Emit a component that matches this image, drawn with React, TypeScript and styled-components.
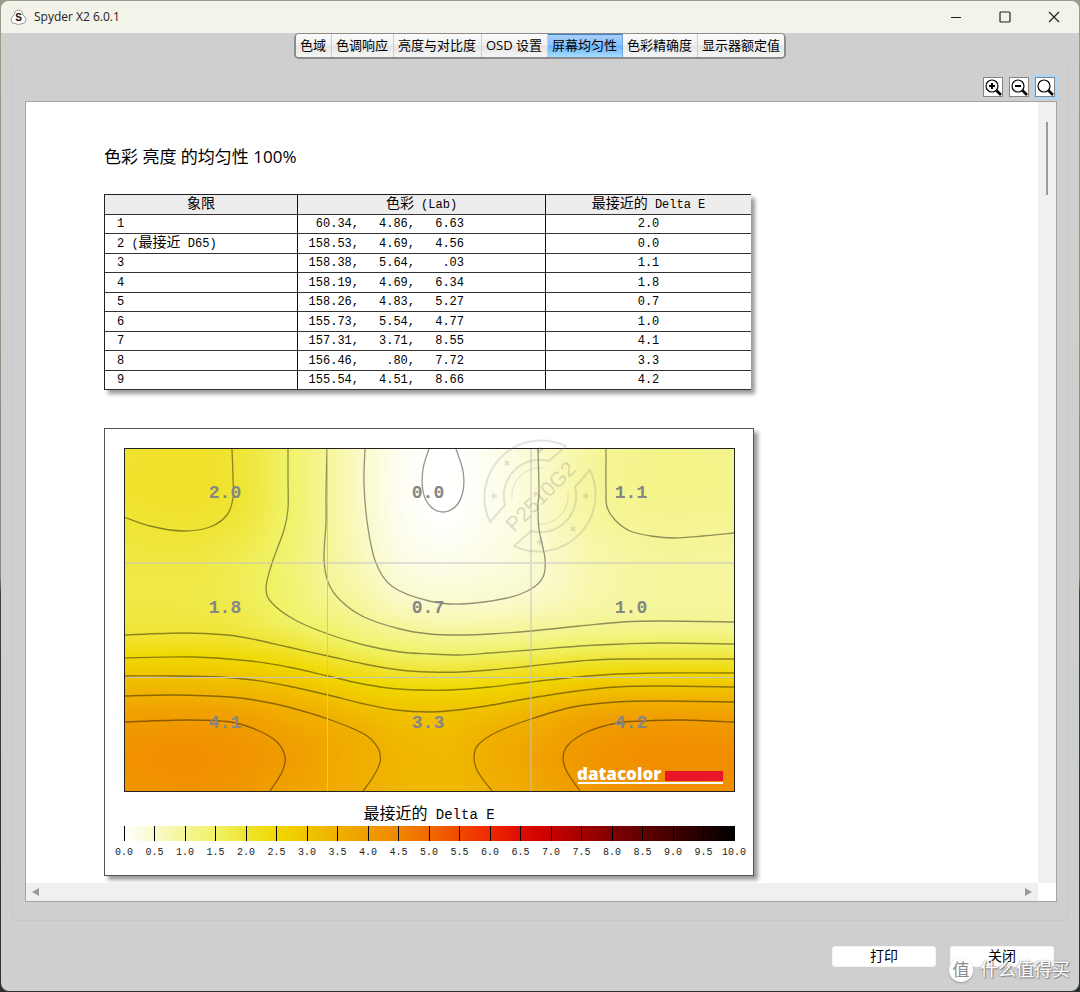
import React from "react";
import styled, { createGlobalStyle, css } from "styled-components";

const ui = `"Open Sans", "Noto Sans CJK SC", sans-serif`;
const mono = `"Liberation Mono", "Noto Sans CJK SC", monospace`;

const GlobalStyle = createGlobalStyle`
  *, *::before, *::after { box-sizing: border-box; }
  body {
    margin: 0;
    background: linear-gradient(#9c9c8a, #8a8a80 58%, #3a403c 60%, #2c302e);
    font-family: ${ui};
    color: #000;
  }
  button { font-family: inherit; color: inherit; cursor: pointer; }
`;

const Desktop = styled.div`
  display: flex;
  min-height: 100vh;
  padding: 1px;
`;

const Window = styled.div`
  position: relative;
  display: flex;
  flex: 1;
  flex-direction: column;
  min-width: 0;
  overflow: hidden;
  border-radius: 8px;
  background: #cfcfcf;
`;

const TitleBar = styled.header`
  display: flex;
  align-items: center;
  height: 32px;
  padding: 0 1px 0 9px;
  background: #f3f3ea;
`;

const Title = styled.h1`
  flex: 1;
  margin: 0 0 0 7px;
  font-size: 12px;
  font-weight: 400;
  line-height: 16px;
  color: #222;
`;

const WindowButton = styled.button`
  display: flex;
  align-items: center;
  justify-content: center;
  width: 49px;
  height: 32px;
  padding: 0;
  border: 0;
  background: none;
`;

const Tabs = styled.nav`
  display: flex;
  align-self: center;
  height: 26px;
  border: 2px solid #8c8c8c;
  border-top: 1px solid #8c8c8c;
  border-radius: 5px;
  overflow: hidden;
  background: #f2f2f2;
`;

const Tab = styled.button<{ $active?: boolean }>`
  height: 23px;
  padding: 0 5px 0 4px;
  border: 0;
  border-right: 1px solid #cdcdcd;
  background: linear-gradient(#fafafa, #f2f2f2 48%, #e4e4e4 52%, #f6f6f6);
  font-size: 13px;
  line-height: 21px;
  white-space: nowrap;

  ${(p) =>
    p.$active &&
    css`
      border-color: #6ea6e4;
      background: linear-gradient(#a9cffa, #8cc2fb 48%, #6db4fc 52%, #a6dcff);
      box-shadow: inset 0 1px #3f7fd0;
    `}

  &:last-child { padding-right: 4px; border-right: 0; }
`;

const Group = styled.main`
  display: flex;
  flex: 1;
  flex-direction: column;
  margin: 2px 11px 0;
  padding: 14px 10px 18px 12px;
  border: 1px solid #c6c6c6;
  border-top: 0;
  border-radius: 0 0 6px 6px;
`;

const Toolbar = styled.div`
  display: flex;
  justify-content: flex-end;
  gap: 6px;
  padding: 2px 2px 4px 0;
`;

const ToolButton = styled.button<{ $active?: boolean }>`
  width: 20px;
  height: 20px;
  padding: 0;
  border: 1px solid #858585;
  background: #fff;
  box-shadow: ${(p) => (p.$active ? "0 0 0 2px #a9d6fb" : "none")};

  svg { display: block; }
`;

const Panel = styled.section`
  display: grid;
  flex: 1;
  grid-template-columns: minmax(0, 1fr) 18px;
  grid-template-rows: 1fr 18px;
  border: 1px solid #a4a4a4;
  background: #fff;
`;

const Report = styled.article`
  padding: 42px 78px 0;
  overflow: hidden;
`;

const Heading = styled.h2`
  margin: 0 0 24px;
  font-size: 17px;
  font-weight: 400;
  line-height: 26px;
`;

const VerticalTrack = styled.div`
  display: flex;
  justify-content: center;
  padding-top: 20px;
  background: #f0f0f0;
`;

const VerticalThumb = styled.div`
  width: 2px;
  height: 73px;
  background: #9a9a9a;
`;

const HorizontalTrack = styled.div`
  display: flex;
  align-items: center;
  justify-content: space-between;
  padding: 0 5px;
  background: #f0f0f0;
`;

const ReportTable = styled.table`
  width: 647px;
  border: 1px solid #222;
  border-right: 0;
  border-bottom: 0;
  border-spacing: 0;
  box-shadow: 4px 4px 4px rgba(0, 0, 0, 0.4);
  table-layout: fixed;
  background: #fff;
`;

const cell = css`
  height: 19px;
  padding: 0;
  border-right: 1px solid #111;
  border-bottom: 1px solid #333;
  font-family: ${mono};
  font-size: 12px;
  font-weight: 400;
  line-height: 18px;
  white-space: pre;

  &:last-child { border-right: 0; }
`;

const HeadCell = styled.th`
  ${cell}
  background: #ededed;
  text-align: center;
`;

const Cell = styled.td<{ $align: "left" | "center" }>`
  ${cell}
  padding-left: ${(p) => (p.$align === "left" ? "12px" : "0")};
  text-align: ${(p) => p.$align};
`;

const Row = styled.tr`
  thead & > *, &:nth-child(even) > * { height: 20px; padding-top: 1px; }
`;

const LabValues = styled.span`
  display: grid;
  grid-template-columns: 49px 56px 49px;
  justify-items: end;
`;

const Han = styled.span`
  font-family: "Noto Sans CJK SC", sans-serif;
  font-size: 14px;
  line-height: 0;
`;

const ChartCard = styled.figure`
  width: 650px;
  margin: 38px 0 6px;
  padding: 19px 19px 15px;
  border: 1px solid #555;
  box-shadow: 4px 4px 4px rgba(0, 0, 0, 0.4);
  background: #fff;

  svg { display: block; overflow: visible; }
`;

const ChartTitle = styled.figcaption`
  padding: 13px 0 1px;
  font-family: ${mono};
  font-size: 14px;
  line-height: 20px;
  text-align: center;

  ${Han} { font-size: 16px; }
`;

const Footer = styled.footer`
  display: flex;
  justify-content: flex-end;
  gap: 14px;
  padding: 25px 25px 24px;
`;

const DialogButton = styled.button`
  width: 104px;
  height: 21px;
  padding: 0 0 2px;
  border: 1px solid #f4f4f4;
  border-radius: 3px;
  background: #fff;
  font-size: 14px;
  line-height: 17px;
`;

const SiteMark = styled.div`
  position: absolute;
  right: 9px;
  bottom: 9px;
  display: flex;
  align-items: center;
  gap: 7px;
  color: #fff;
  font-size: 18px;
  line-height: 25px;
  text-shadow: 0 0 2px #777, 1px 1px 1px #888;
  pointer-events: none;
`;

const SiteBadge = styled.span`
  width: 24px;
  height: 24px;
  border-radius: 50%;
  background: #fff;
  box-shadow: 0 1px 2px #999;
  color: #8c8c8c;
  font-size: 17px;
  line-height: 23px;
  text-align: center;
  text-shadow: none;
`;

type Point = [number, number];

const rows: [string, string[], string][] = [
  ["1", ["60.34,", "4.86,", "6.63"], "2.0"],
  ["2", ["158.53,", "4.69,", "4.56"], "0.0"],
  ["3", ["158.38,", "5.64,", ".03"], "1.1"],
  ["4", ["158.19,", "4.69,", "6.34"], "1.8"],
  ["5", ["158.26,", "4.83,", "5.27"], "0.7"],
  ["6", ["155.73,", "5.54,", "4.77"], "1.0"],
  ["7", ["157.31,", "3.71,", "8.55"], "4.1"],
  ["8", ["156.46,", ".80,", "7.72"], "3.3"],
  ["9", ["155.54,", "4.51,", "8.66"], "4.2"],
];

// Delta E colour scale: value, red, green, blue
const scale: [number, number, number, number][] = [
  [0, 255, 255, 255],
  [0.5, 250, 250, 205],
  [1, 245, 245, 150],
  [1.5, 240, 242, 104],
  [2, 240, 228, 52],
  [2.5, 240, 216, 0],
  [3, 240, 196, 0],
  [3.5, 240, 176, 0],
  [4, 240, 156, 0],
  [4.5, 241, 134, 0],
  [5, 240, 106, 0],
  [6, 240, 40, 0],
  [6.5, 220, 12, 0],
  [7, 200, 0, 0],
  [8, 128, 0, 0],
  [9, 64, 0, 0],
  [10, 0, 0, 0],
];

function colorOf(value: number) {
  const v = Math.max(0, Math.min(10, value));
  let i = 0;
  while (i < scale.length - 2 && v > scale[i + 1][0]) i++;
  const a = scale[i];
  const b = scale[i + 1];
  const t = (v - a[0]) / (b[0] - a[0]);
  const c = [1, 2, 3].map((k) => Math.round(a[k] + (b[k] - a[k]) * t));
  return `rgb(${c.join(",")})`;
}

// Profiles of Delta E down the screen, one for each measured column
const profiles: { x: number; points: Point[] }[] = [
  { x: 0, points: [[0, 2.05], [35, 2.07], [68, 2], [110, 1.86], [140, 1.82], [165, 1.88], [186, 2], [208, 2.5], [227, 3], [247, 3.5], [272, 4], [308, 4.24], [342, 4.18]] },
  { x: 60, points: [[0, 2.1], [35, 2.12], [82, 2], [120, 1.86], [145, 1.82], [165, 1.87], [184, 2], [207, 2.5], [227, 3], [246, 3.5], [270, 4], [308, 4.32], [342, 4.24]] },
  { x: 109, points: [[0, 2], [45, 2.01], [70, 1.95], [110, 1.75], [140, 1.7], [165, 1.78], [187, 2], [210, 2.5], [229, 3], [249, 3.5], [273, 4], [308, 4.22], [342, 4.14]] },
  { x: 164, points: [[0, 1.5], [55, 1.5], [90, 1.44], [125, 1.4], [168, 1.5], [197, 2], [217, 2.5], [236, 3], [257, 3.5], [308, 3.98], [342, 3.85]] },
  { x: 203, points: [[0, 1], [60, 1], [110, 0.98], [134, 1], [185, 1.5], [207, 2], [226, 2.5], [245, 3], [269, 3.5], [308, 3.74], [342, 3.66]] },
  { x: 240, points: [[0, 0.52], [35, 0.5], [60, 0.52], [110, 0.64], [168, 1], [197, 1.5], [215, 2], [234, 2.5], [255, 3], [284, 3.5], [308, 3.55], [342, 3.5]] },
  { x: 276, points: [[0, 0.16], [40, 0.14], [80, 0.19], [143, 0.5], [180, 1], [203, 1.5], [221, 2], [239, 2.5], [261, 3], [308, 3.38], [342, 3.35]] },
  { x: 319, points: [[0, 0], [62, 0], [100, 0.14], [154, 0.5], [186, 1], [206, 1.5], [223, 2], [241, 2.5], [262, 3], [308, 3.28], [342, 3.26]] },
  { x: 366, points: [[0, 0.16], [40, 0.15], [80, 0.19], [152, 0.5], [185, 1], [204, 1.5], [220, 2], [237, 2.5], [257, 3], [286, 3.5], [308, 3.57], [342, 3.5]] },
  { x: 414, points: [[0, 0.5], [60, 0.49], [100, 0.46], [136, 0.5], [181, 1], [200, 1.5], [216, 2], [231, 2.5], [248, 3], [268, 3.5], [308, 3.84], [342, 3.74]] },
  { x: 482, points: [[0, 1], [50, 1], [70, 0.97], [100, 0.86], [135, 0.83], [174, 1], [195, 1.5], [211, 2], [225, 2.5], [238, 3], [254, 3.5], [276, 4], [308, 4.2], [342, 4.12]] },
  { x: 550, points: [[0, 1.12], [35, 1.14], [89, 1], [130, 0.92], [173, 1], [194, 1.5], [210, 2], [224, 2.5], [238, 3], [253, 3.5], [271, 4], [308, 4.35], [342, 4.3]] },
  { x: 610, points: [[0, 1.1], [35, 1.11], [84, 1], [125, 0.92], [173, 1], [194, 1.5], [210, 2], [224, 2.5], [238, 3], [253, 3.5], [272, 4], [308, 4.33], [342, 4.27]] },
];

// Monotone cubic interpolation through sorted points
function interpolate(points: Point[], at: number) {
  const n = points.length;
  let i = 0;
  while (i < n - 2 && at > points[i + 1][0]) i++;
  const slope = (k: number) =>
    (points[k + 1][1] - points[k][1]) / (points[k + 1][0] - points[k][0]);
  const tangent = (k: number) => {
    if (k === 0) return slope(0);
    if (k === n - 1) return slope(n - 2);
    const a = slope(k - 1);
    const b = slope(k);
    return a * b <= 0 ? 0 : (2 * a * b) / (a + b);
  };
  const h = points[i + 1][0] - points[i][0];
  const t = (at - points[i][0]) / h;
  const t2 = t * t;
  const t3 = t2 * t;
  return (
    (2 * t3 - 3 * t2 + 1) * points[i][1] +
    (t3 - 2 * t2 + t) * h * tangent(i) +
    (3 * t2 - 2 * t3) * points[i + 1][1] +
    (t3 - t2) * h * tangent(i + 1)
  );
}

const STRIP = 5;
const strips = Array.from({ length: 610 / STRIP }, (_, k) => k * STRIP);
const samples = Array.from({ length: 39 }, (_, k) => k * 9);
const sampled = samples.map((y) =>
  profiles.map((p): Point => [p.x, interpolate(p.points, y)])
);

const contours: Point[][] = [
  [[305, 0], [299, 20], [299, 42], [306, 57], [319, 63], [332, 57], [339, 42], [339, 22], [332, 0]],
  [[241, 0], [240, 36], [244, 79], [252, 114], [269, 138], [305, 152], [338, 155], [383, 149], [407, 140], [419, 128], [421, 110], [415, 80], [414, 56], [415, 43], [414, 0]],
  [[203, 0], [202, 43], [202, 73], [200, 109], [204, 133], [216, 151], [240, 168], [276, 180], [306, 185], [336, 186], [366, 185], [407, 182], [456, 177], [498, 173], [539, 172], [610, 173]],
  [[482, 0], [482, 42], [483, 58], [491, 71], [506, 82], [527, 87], [550, 89], [579, 87], [610, 84]],
  [[164, 0], [164, 30], [164, 60], [160, 81], [148, 114], [142, 139], [148, 154], [171, 171], [204, 185], [240, 196], [276, 203], [306, 205], [336, 206], [366, 204], [407, 201], [456, 197], [498, 195], [539, 194], [610, 195]],
  [[0, 68], [26, 77], [59, 82], [86, 78], [103, 66], [109, 49], [109, 29], [108, 0]],
  [[0, 186], [59, 184], [103, 186], [133, 191], [164, 198], [204, 207], [240, 215], [276, 221], [306, 223], [336, 223], [366, 221], [407, 217], [456, 212], [498, 210], [610, 210]],
  [[0, 209], [69, 208], [126, 212], [164, 218], [204, 227], [234, 234], [264, 239], [296, 241], [326, 241], [366, 238], [407, 233], [453, 228], [493, 225], [536, 224], [610, 224]],
  [[0, 227], [49, 227], [96, 228], [129, 231], [164, 237], [204, 246], [240, 255], [272, 261], [306, 263], [334, 261], [368, 256], [407, 249], [453, 242], [493, 238], [536, 237], [610, 238]],
  [[0, 247], [49, 246], [106, 248], [136, 252], [164, 258], [204, 270], [240, 285], [254, 299], [256, 313], [249, 328], [239, 342]],
  [[368, 342], [354, 323], [350, 309], [354, 296], [373, 283], [407, 270], [449, 258], [493, 253], [536, 252], [610, 253]],
  [[0, 273], [63, 271], [106, 273], [133, 281], [153, 293], [161, 308], [158, 323], [146, 342]],
  [[456, 342], [443, 323], [439, 309], [444, 296], [463, 283], [493, 274], [519, 272], [559, 271], [610, 273]],
];

function smoothPath(pts: Point[]) {
  let d = `M${pts[0].join(" ")}`;
  for (let i = 0; i < pts.length - 1; i++) {
    const a = pts[i - 1] ?? pts[i];
    const b = pts[i];
    const c = pts[i + 1];
    const e = pts[i + 2] ?? c;
    d += `C${b[0] + (c[0] - a[0]) / 6} ${b[1] + (c[1] - a[1]) / 6} ${c[0] - (e[0] - b[0]) / 6} ${c[1] - (e[1] - b[1]) / 6} ${c[0]} ${c[1]}`;
  }
  return d;
}

function Stamp() {
  const stars: Point[] = [[-33, -33], [-46, 0], [46, 0], [33, 33], [0, 46], [0, -46]];
  return (
    <g transform="translate(416 47)" fill="none" stroke="#808080" strokeOpacity="0.22" strokeWidth="2">
      <path d="M-50 26A57 57 0 0 1 26 -50L9 -35A36 36 0 0 0 -35 9Z" strokeLinejoin="round" />
      <path d="M50 -26A57 57 0 0 1 -26 50L-9 35A36 36 0 0 0 35 -9Z" strokeLinejoin="round" />
      <path d="M-28 3A28 28 0 0 1 3 -28M28 -3A28 28 0 0 1 -3 28" strokeWidth="1" />
      {stars.map(([x, y]) => (
        <path key={`${x},${y}`} d={`M${x - 3} ${y}H${x + 3}M${x} ${y - 3}V${y + 3}`} transform={Math.abs(x) === 33 ? `rotate(45 ${x} ${y})` : undefined} />
      ))}
      <text transform="rotate(-45)" y="8" textAnchor="middle" fontFamily="Liberation Sans, sans-serif" fontSize="21" fill="#808080" fillOpacity="0.28" stroke="none">
        P2510G2
      </text>
    </g>
  );
}

function HeatMap() {
  return (
    <svg width="611" height="344" viewBox="0 -1 611 344" role="img" aria-label="最接近的 Delta E">
      <defs>
        {strips.map((x) => (
          <linearGradient key={x} id={`strip${x}`} x1="0" y1="0" x2="0" y2="1">
            {samples.map((y, j) => (
              <stop key={y} offset={y / 342} stopColor={colorOf(interpolate(sampled[j], x + STRIP / 2))} />
            ))}
          </linearGradient>
        ))}
      </defs>
      <g shapeRendering="crispEdges">
        {strips.map((x) => (
          <rect key={x} x={x} y="0" width={STRIP} height="342" fill={`url(#strip${x})`} />
        ))}
      </g>
      <g fill="none" stroke="#000" strokeOpacity="0.42" strokeWidth="1.3">
        {contours.map((c, i) => (
          <path key={i} d={smoothPath(c)} />
        ))}
      </g>
      <g stroke="#c4c4c4">
        <path d="M203.5 0V342M0 228.5H610" />
        <path d="M407 0V342M0 114H610" strokeWidth="2" strokeOpacity="0.5" />
      </g>
      <g fontFamily="Liberation Mono, monospace" fontSize="18" fontWeight="700" fill="#868686" textAnchor="middle">
        {rows.map((r, i) => (
          <text key={r[0]} x={101 + (i % 3) * 203} y={49 + Math.floor(i / 3) * 115}>
            {r[2]}
          </text>
        ))}
      </g>
      <text x="453" y="331" fontFamily="Open Sans, sans-serif" fontSize="17" fontWeight="800" fill="#fff">
        datacolor
      </text>
      <rect x="541" y="322" width="58" height="10" fill="#e81626" />
      <rect x="454" y="333" width="145" height="2" fill="#fff" />
      <rect x="0.5" y="-0.5" width="610" height="343" fill="none" stroke="#222" />
      <Stamp />
    </svg>
  );
}

function ColorScale() {
  const ticks = Array.from({ length: 21 }, (_, k) => k / 2);
  return (
    <svg width="611" height="34" viewBox="0 0 611 34" role="img" aria-label="0.0 – 10.0">
      <defs>
        <linearGradient id="scale">
          {scale.map((s) => (
            <stop key={s[0]} offset={s[0] / 10} stopColor={colorOf(s[0])} />
          ))}
        </linearGradient>
      </defs>
      <rect x="0" y="0" width="611" height="15" fill="url(#scale)" />
      <g fontFamily="Liberation Mono, monospace" fontSize="10" fill="#222" textAnchor="middle">
        {ticks.map((t) => (
          <React.Fragment key={t}>
            <rect x={Math.floor(t * 61)} y="0" width="1" height="15" fill="#000" />
            <text x={t * 61} y="29">
              {t.toFixed(1)}
            </text>
          </React.Fragment>
        ))}
      </g>
    </svg>
  );
}

function Magnifier({ mark }: { mark?: "plus" | "minus" }) {
  return (
    <svg width="18" height="18" viewBox="0 0 18 18" fill="none" stroke="#000">
      <circle cx="8" cy="8" r="6" strokeWidth="1.2" />
      <path d="M12.5 12.5L17 17" strokeWidth="2.6" />
      {mark && <path d="M5 8H11" strokeWidth="2" />}
      {mark === "plus" && <path d="M8 5V11" strokeWidth="2" />}
    </svg>
  );
}

function SpyderLogo() {
  return (
    <svg width="17" height="17" viewBox="0 0 17 17" aria-hidden="true">
      <path d="M5 3Q8.500 -1 12 3L13 6Q18 10 14.500 14Q8.500 17 2.500 14Q-1 10 4 6Z" fill="#fff" stroke="#9a9a9a" />
      <text x="8.500" y="12" fontFamily="Liberation Sans, sans-serif" fontSize="10" fontWeight="700" textAnchor="middle" fill="#111">
        S
      </text>
    </svg>
  );
}

const tabs = ["色域", "色调响应", "亮度与对比度", "OSD 设置", "屏幕均匀性", "色彩精确度", "显示器额定值"];

export default function App() {
  return (
    <Desktop>
      <GlobalStyle />
      <Window>
        <TitleBar>
          <SpyderLogo />
          <Title>Spyder X2 6.0.1</Title>
          <WindowButton aria-label="最小化">
            <svg width="12" height="12"><path d="M1 6.500H11" stroke="#222" /></svg>
          </WindowButton>
          <WindowButton aria-label="最大化">
            <svg width="12" height="12"><rect x="1" y="1" width="10" height="10" rx="1" fill="none" stroke="#222" strokeWidth="1.2" /></svg>
          </WindowButton>
          <WindowButton aria-label="关闭窗口">
            <svg width="12" height="12"><path d="M1 1L11 11M11 1L1 11" stroke="#222" strokeWidth="1.2" /></svg>
          </WindowButton>
        </TitleBar>

        <Tabs role="tablist">
          {tabs.map((t) => (
            <Tab key={t} role="tab" $active={t === "屏幕均匀性"} aria-selected={t === "屏幕均匀性"}>
              {t}
            </Tab>
          ))}
        </Tabs>

        <Group>
          <Toolbar>
            <ToolButton aria-label="放大"><Magnifier mark="plus" /></ToolButton>
            <ToolButton aria-label="缩小"><Magnifier mark="minus" /></ToolButton>
            <ToolButton aria-label="实际大小" $active><Magnifier /></ToolButton>
          </Toolbar>
          <Panel>
            <Report>
              <Heading>色彩 亮度 的均匀性 100%</Heading>
              <ReportTable>
                <colgroup>
                  <col width="193" />
                  <col width="248" />
                  <col />
                </colgroup>
                <thead>
                  <Row>
                    <HeadCell scope="col"><Han>象限</Han></HeadCell>
                    <HeadCell scope="col"><Han>色彩</Han> (Lab)</HeadCell>
                    <HeadCell scope="col"><Han>最接近的</Han> Delta E</HeadCell>
                  </Row>
                </thead>
                <tbody>
                  {rows.map(([id, lab, delta]) => (
                    <Row key={id}>
                      <Cell $align="left">
                        {id}
                        {id === "2" && <> (<Han>最接近</Han> D65)</>}
                      </Cell>
                      <Cell $align="left">
                        <LabValues>
                          {lab.map((v, i) => (
                            <span key={i}>{v}</span>
                          ))}
                        </LabValues>
                      </Cell>
                      <Cell $align="center">{delta}</Cell>
                    </Row>
                  ))}
                </tbody>
              </ReportTable>
              <ChartCard>
                <HeatMap />
                <ChartTitle><Han>最接近的</Han> Delta E</ChartTitle>
                <ColorScale />
              </ChartCard>
            </Report>
            <VerticalTrack><VerticalThumb /></VerticalTrack>
            <HorizontalTrack>
              <svg width="8" height="10"><path d="M8 1V9L1 5Z" fill="#9a9a9a" /></svg>
              <svg width="8" height="10"><path d="M0 1V9L7 5Z" fill="#9a9a9a" /></svg>
            </HorizontalTrack>
          </Panel>
        </Group>

        <Footer>
          <DialogButton>打印</DialogButton>
          <DialogButton>关闭</DialogButton>
        </Footer>
        <SiteMark>
          <SiteBadge>值</SiteBadge>
          什么值得买
        </SiteMark>
      </Window>
    </Desktop>
  );
}
